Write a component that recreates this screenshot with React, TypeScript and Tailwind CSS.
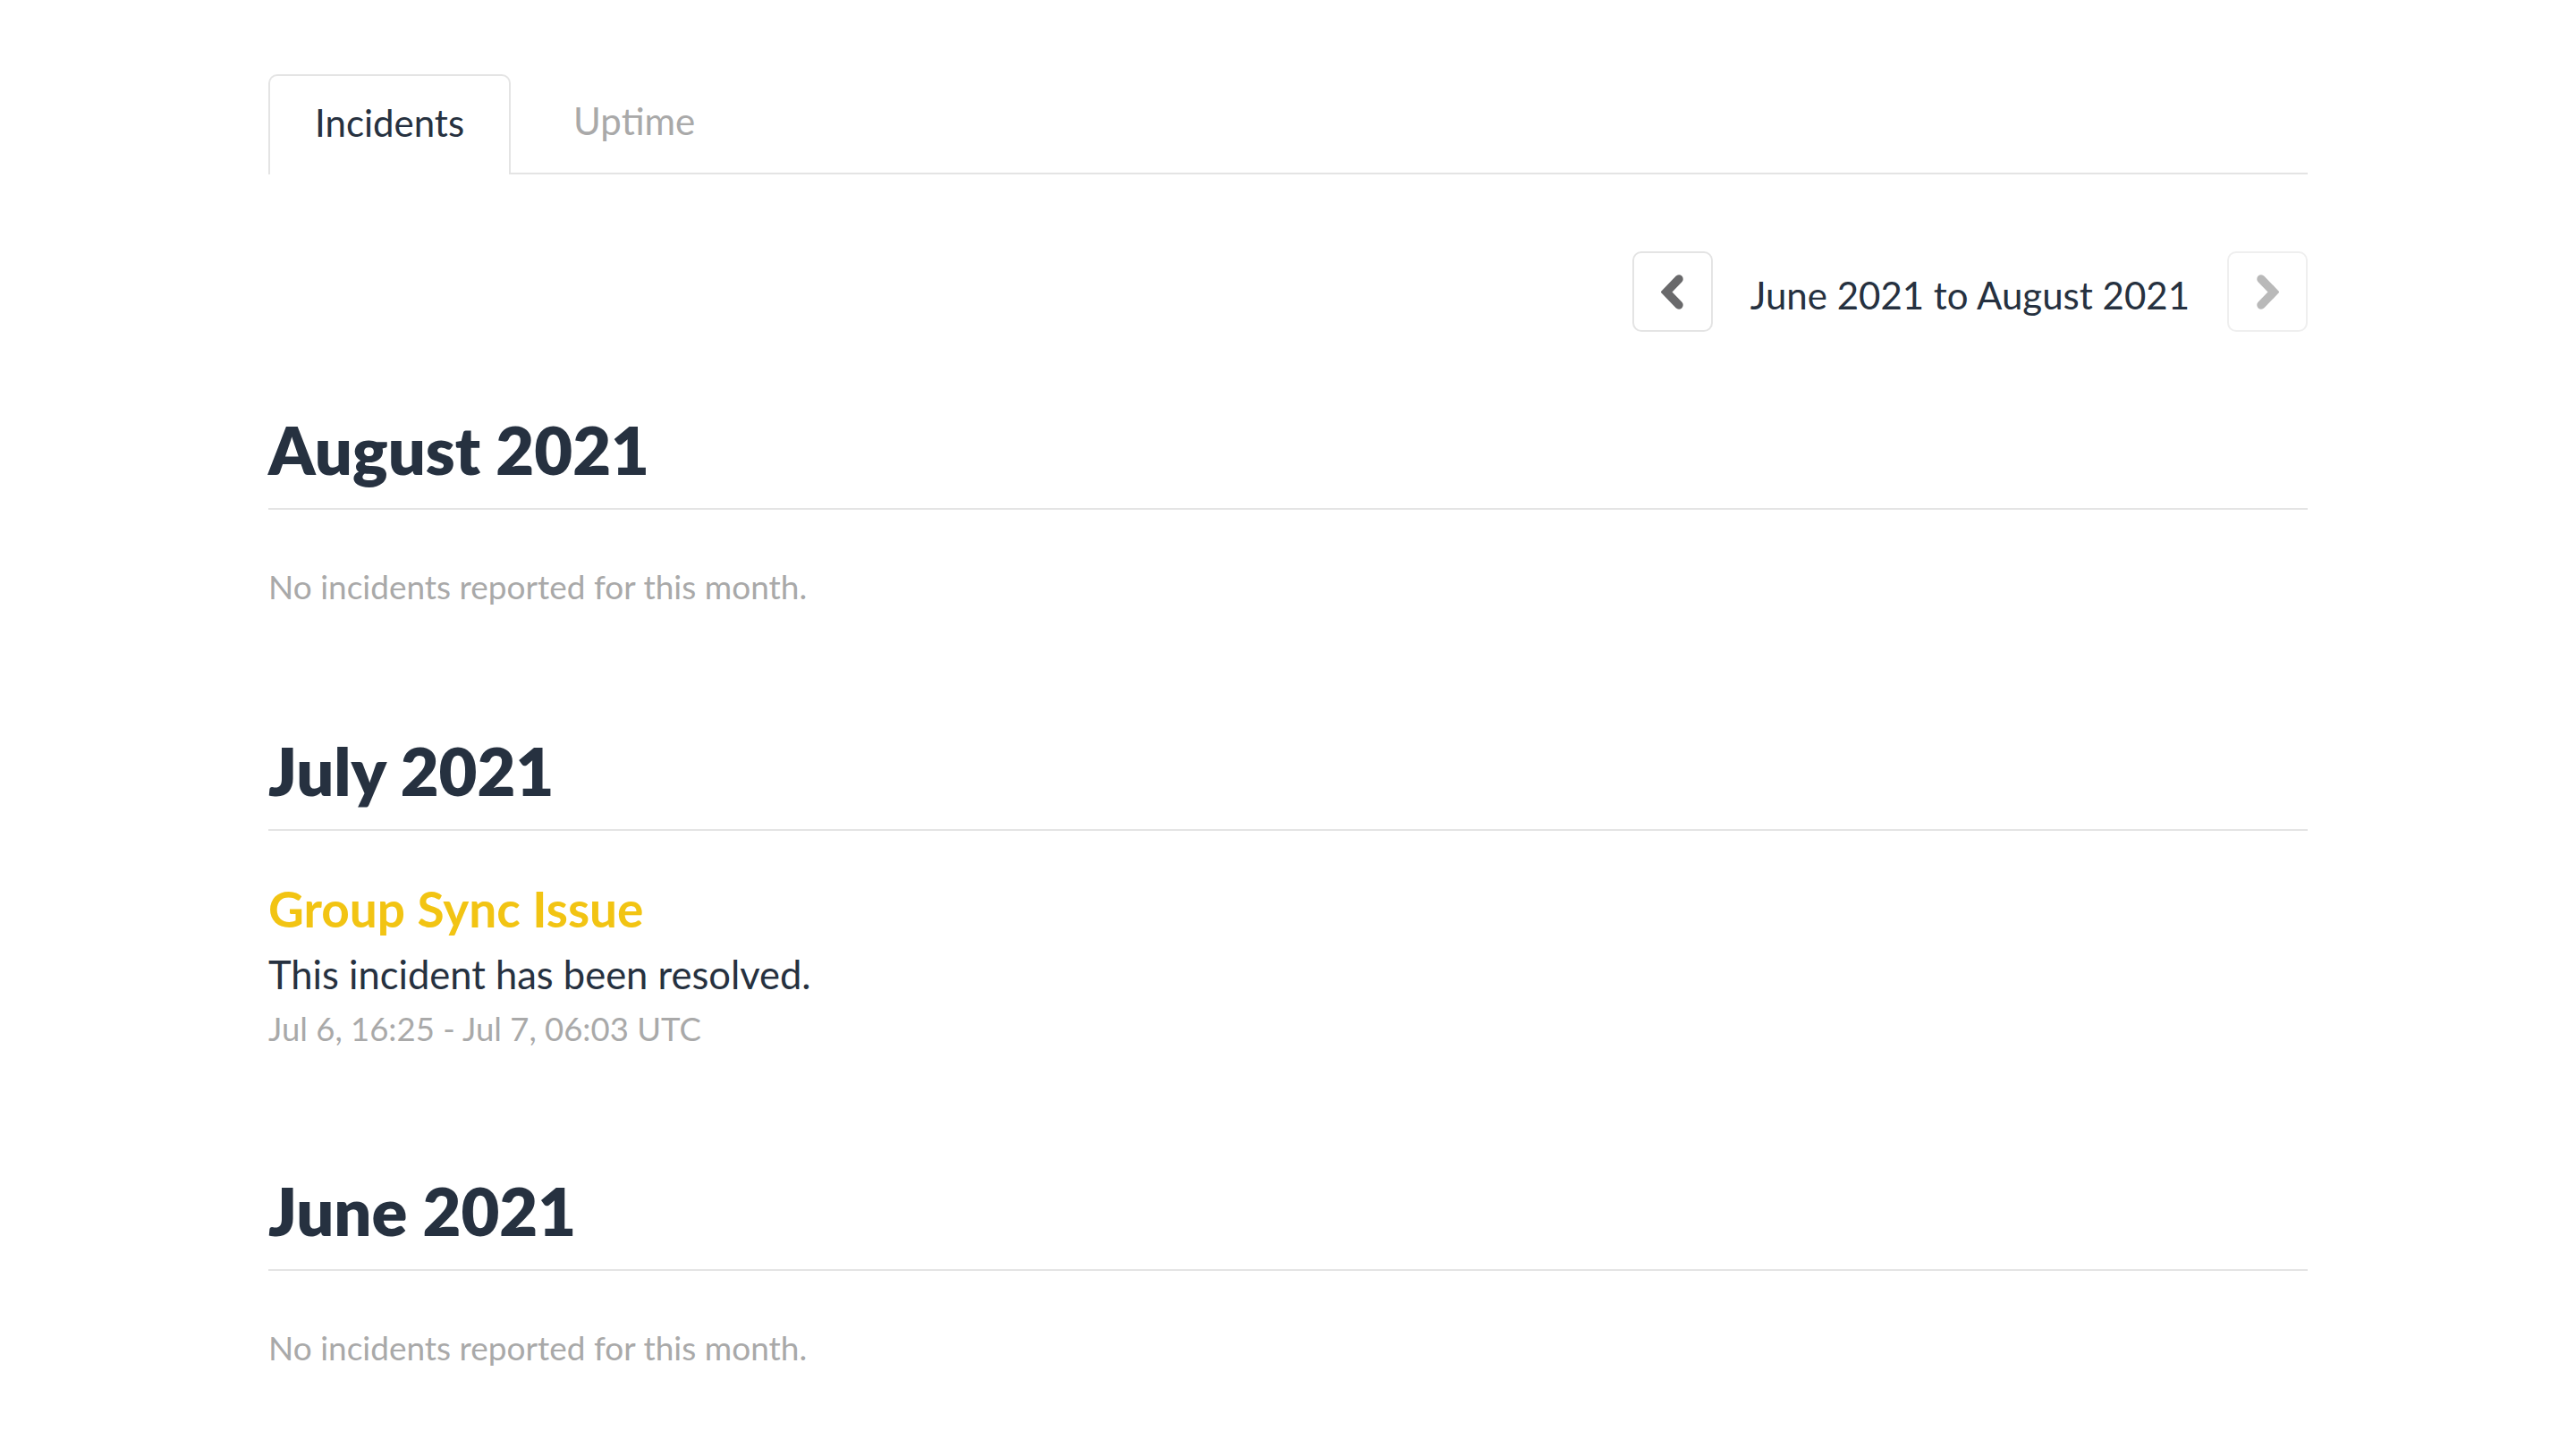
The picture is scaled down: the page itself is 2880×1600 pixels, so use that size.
import React from "react";

function Chevron({ dir, color }: { dir: "left" | "right"; color: string }) {
  const pts = dir === "left" ? "20,5 6,19.5 20,34" : "5,5 19,19.5 5,34";
  return (
    <svg width="25" height="39" viewBox="0 0 25 39" fill="none">
      <polyline points={pts} stroke={color} strokeWidth="9.5" strokeLinecap="round" strokeLinejoin="miter" />
    </svg>
  );
}

function MonthHeading({ children }: { children: React.ReactNode }) {
  return (
    <div className="border-b-2 border-[#e4e4e4] pb-[22px]">
      <h2 className="text-[74px] leading-[86px] font-extrabold text-[#263140]">{children}</h2>
    </div>
  );
}

function NoIncidents() {
  return (
    <p className="mt-[57px] text-[37px] leading-[57px] text-[#a9a9a9]">No incidents reported for this month.</p>
  );
}

export default function App() {
  return (
    <div className="min-h-screen bg-white" style={{ fontFamily: "Lato, 'Open Sans', sans-serif" }}>
      <div className="mx-auto w-[2280px] pt-[83px] pb-[80px]">
        {/* Tabs */}
        <div className="flex items-end border-b-2 border-[#e4e4e4]">
          <div className="-mb-[2px] flex h-[112px] items-center rounded-t-[10px] border-2 border-b-0 border-[#e4e4e4] bg-white px-[50px] pb-[6px]">
            <span className="text-[42px] text-[#263140]">Incidents</span>
          </div>
          <div className="flex h-[110px] items-center pl-[70px] pr-[50px] pb-[6px]">
            <span className="text-[42px] text-[#a9a9a9]">Uptime</span>
          </div>
        </div>

        {/* Pager */}
        <div className="mt-[86px] flex items-center justify-end">
          <button className="flex h-[90px] w-[90px] items-center justify-center rounded-[10px] border-2 border-[#e4e4e4] bg-white">
            <Chevron dir="left" color="#69696b" />
          </button>
          <span className="mx-[42px] mt-[8px] text-[42px] text-[#263140]">June 2021 to August 2021</span>
          <button className="flex h-[90px] w-[90px] items-center justify-center rounded-[10px] border-2 border-[#efefef] bg-white">
            <Chevron dir="right" color="#b9b9b9" />
          </button>
        </div>

        {/* August */}
        <section className="mt-[89px]">
          <MonthHeading>August 2021</MonthHeading>
          <NoIncidents />
        </section>

        {/* July */}
        <section className="mt-[135px]">
          <MonthHeading>July 2021</MonthHeading>
          <div className="mt-[54px]">
            <a className="block text-[55px] leading-[66px] font-bold text-[#f2c413]">Group Sync Issue</a>
            <p className="mt-[14px] text-[43.5px] leading-[53px] text-[#263140]">This incident has been resolved.</p>
            <p className="mt-[11px] text-[36.5px] leading-[46px] text-[#a9a9a9]">Jul 6, 16:25 - Jul 7, 06:03 UTC</p>
          </div>
        </section>

        {/* June */}
        <section className="mt-[138px]">
          <MonthHeading>June 2021</MonthHeading>
          <NoIncidents />
        </section>
      </div>
    </div>
  );
}
